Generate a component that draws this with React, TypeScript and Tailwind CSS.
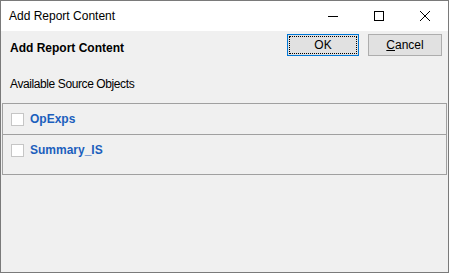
import React from "react";

const font = "font-['Liberation_Sans',Arial,sans-serif]";

const sources = ["OpExps", "Summary_IS"];

const TitleButton = ({ children }: { children: React.ReactNode }) => (
    <div className="w-[46px] h-full flex items-center justify-center">{children}</div>
);

const App = () => {
    return (
        <div className={`w-[449px] h-[273px] flex flex-col border border-[#7a7a7a] bg-[#f0f0f0] text-black ${font}`}>
            {/* title bar */}
            <div className="h-[30px] bg-white flex items-center justify-between shrink-0">
                <span className="pl-[8px] text-[12px] leading-[14px]">Add Report Content</span>
                <div className="flex h-full">
                    <TitleButton>
                        <svg width="10" height="10" viewBox="0 0 10 10">
                            <line x1="0" y1="5.5" x2="10" y2="5.5" stroke="#000" strokeWidth="1" />
                        </svg>
                    </TitleButton>
                    <TitleButton>
                        <svg width="10" height="10" viewBox="0 0 10 10">
                            <rect x="0.5" y="0.5" width="9" height="9" fill="none" stroke="#000" strokeWidth="1" />
                        </svg>
                    </TitleButton>
                    <TitleButton>
                        <svg width="10" height="10" viewBox="0 0 10 10">
                            <path d="M0 0 L10 10 M10 0 L0 10" stroke="#000" strokeWidth="1" />
                        </svg>
                    </TitleButton>
                </div>
            </div>

            <div className="flex-1 flex flex-col">
                <div className="flex justify-between items-start pt-[3px] pl-[9px] pr-[6px]">
                    <h1 className="mt-[7px] text-[12px] leading-[14px] font-bold">Add Report Content</h1>
                    <div className="flex gap-[9px]">
                        <button className="w-[72px] h-[22px] bg-[#e1e1e1] border border-[#0078d7] outline-1 outline-dotted outline-black -outline-offset-3 text-[12px] leading-[14px]">
                            OK
                        </button>
                        <button className="w-[74px] h-[22px] bg-[#e1e1e1] border border-[#adadad] text-[12px] leading-[14px]">
                            <u>C</u>ancel
                        </button>
                    </div>
                </div>

                <p className="mt-[21px] pl-[9px] text-[12px] leading-[14px] tracking-[-0.4px]">Available Source Objects</p>

                <div className="mt-[12px] mx-[1px] border border-[#a0a0a0] pb-[9px]">
                    {sources.map((name, i) => (
                        <div
                            key={name}
                            className={`h-[30px] flex items-center pl-[8px] gap-[6px] ${i < sources.length - 1 ? "border-b border-[#a0a0a0] h-[31px]" : ""}`}
                        >
                            <span className="w-[13px] h-[13px] border border-[#c6c6c6] bg-white" />
                            <span className="text-[12px] leading-[14px] font-bold text-[#1c5fbd]">{name}</span>
                        </div>
                    ))}
                </div>
            </div>
        </div>
    );
};

export default App;
